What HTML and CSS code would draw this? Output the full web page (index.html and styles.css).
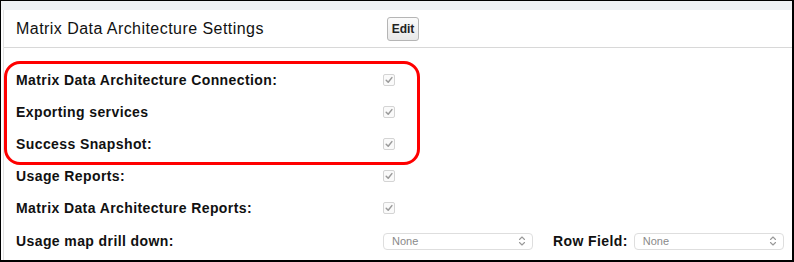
FILE: index.html
```html
<!DOCTYPE html>
<html>
<head>
<meta charset="utf-8">
<link rel="stylesheet" href="styles.css">
</head>
<body>
<div class="frame">
  <div class="topstrip"></div>
  <div class="panel">
    <div class="header">
      <h2 class="title">Matrix Data Architecture Settings</h2>
      <button class="edit">Edit</button>
    </div>
    <div class="rows">
      <div class="row"><span class="label">Matrix Data Architecture Connection:</span><span class="cb"><svg viewBox="0 0 12 12" width="12" height="12"><path d="M3.2 6.3 L5.2 8.3 L8.9 3.6" fill="none" stroke="#9a9a9a" stroke-width="1.5" stroke-linecap="round" stroke-linejoin="round"/></svg></span></div>
      <div class="row"><span class="label">Exporting services</span><span class="cb"><svg viewBox="0 0 12 12" width="12" height="12"><path d="M3.2 6.3 L5.2 8.3 L8.9 3.6" fill="none" stroke="#9a9a9a" stroke-width="1.5" stroke-linecap="round" stroke-linejoin="round"/></svg></span></div>
      <div class="row"><span class="label">Success Snapshot:</span><span class="cb"><svg viewBox="0 0 12 12" width="12" height="12"><path d="M3.2 6.3 L5.2 8.3 L8.9 3.6" fill="none" stroke="#9a9a9a" stroke-width="1.5" stroke-linecap="round" stroke-linejoin="round"/></svg></span></div>
      <div class="row"><span class="label">Usage Reports:</span><span class="cb"><svg viewBox="0 0 12 12" width="12" height="12"><path d="M3.2 6.3 L5.2 8.3 L8.9 3.6" fill="none" stroke="#9a9a9a" stroke-width="1.5" stroke-linecap="round" stroke-linejoin="round"/></svg></span></div>
      <div class="row"><span class="label">Matrix Data Architecture Reports:</span><span class="cb"><svg viewBox="0 0 12 12" width="12" height="12"><path d="M3.2 6.3 L5.2 8.3 L8.9 3.6" fill="none" stroke="#9a9a9a" stroke-width="1.5" stroke-linecap="round" stroke-linejoin="round"/></svg></span></div>
      <div class="row"><span class="label">Usage map drill down:</span>
        <span class="select"><span>None</span><svg viewBox="0 0 8 12" width="8" height="12"><path d="M1.5 4.5 L4 2 L6.5 4.5 M1.5 7.5 L4 10 L6.5 7.5" fill="none" stroke="#999" stroke-width="1.1" stroke-linecap="round" stroke-linejoin="round"/></svg></span>
        <span class="label inline">Row Field:</span>
        <span class="select"><span>None</span><svg viewBox="0 0 8 12" width="8" height="12"><path d="M1.5 4.5 L4 2 L6.5 4.5 M1.5 7.5 L4 10 L6.5 7.5" fill="none" stroke="#999" stroke-width="1.1" stroke-linecap="round" stroke-linejoin="round"/></svg></span>
      </div>
    </div>
    <div class="highlight"></div>
  </div>
</div>
</body>
</html>
```
FILE: styles.css
```css
html, body {
  margin: 0;
  padding: 0;
  background: #fff;
}
body {
  font-family: "Liberation Sans", Arial, sans-serif;
  color: #1a1a1a;
}
.frame {
  width: 794px;
  height: 262px;
  box-sizing: border-box;
  border-top: 1px solid #000;
  border-left: 1px solid #000;
  border-right: 2px solid #000;
  border-bottom: 2px solid #000;
  display: flex;
  flex-direction: column;
  overflow: hidden;
}
.topstrip {
  height: 9px;
  background: #eef1f4;
  flex: none;
}
.panel {
  position: relative;
  flex: 1;
  margin-left: 2px;
  border-left: 1px solid #e2e2e2;
}
.header {
  display: flex;
  align-items: center;
  height: 37px;
  border-bottom: 1px solid #d8d8d8;
  padding-left: 12px;
}
.title {
  margin: 0;
  font-size: 16px;
  font-weight: normal;
  width: 371px;
  flex: none;
  color: #111;
  letter-spacing: 0.45px;
  white-space: nowrap;
}
.edit {
  width: 32px;
  height: 24px;
  padding: 0;
  font-family: "Liberation Sans", Arial, sans-serif;
  font-size: 12px;
  font-weight: bold;
  color: #222;
  background: linear-gradient(#fbfbfb, #e8e8e8);
  border: 1px solid #b5b5b5;
  border-radius: 3px;
  margin-top: 1px;
}
.rows {
  padding-top: 16px;
  padding-left: 12px;
}
.row {
  display: flex;
  align-items: center;
  height: 32px;
}
.label {
  font-size: 14px;
  font-weight: bold;
  letter-spacing: 0.4px;
  width: 367px;
  color: #111;
  flex: none;
  white-space: nowrap;
}
.label.inline {
  width: auto;
  margin-left: 20px;
  margin-right: 6px;
}
.cb {
  width: 12px;
  height: 12px;
  box-sizing: border-box;
  border: 1px solid #d4d4d4;
  border-radius: 2px;
  background: #fafafa;
  display: flex;
  align-items: center;
  justify-content: center;
}
.cb svg {
  flex: none;
}
.row:nth-child(6) {
  height: 34px;
}
.select {
  width: 150px;
  height: 17px;
  box-sizing: border-box;
  border: 1px solid #dedede;
  border-radius: 4px;
  display: flex;
  align-items: center;
  justify-content: space-between;
  padding: 0 6px 0 8px;
  font-size: 11px;
  color: #8a8a8a;
  background: #fff;
  flex: none;
}
.highlight {
  position: absolute;
  left: 0;
  top: 51px;
  width: 416px;
  height: 104px;
  box-sizing: border-box;
  border: 3px solid #ff0000;
  border-radius: 16px;
  pointer-events: none;
}
```
